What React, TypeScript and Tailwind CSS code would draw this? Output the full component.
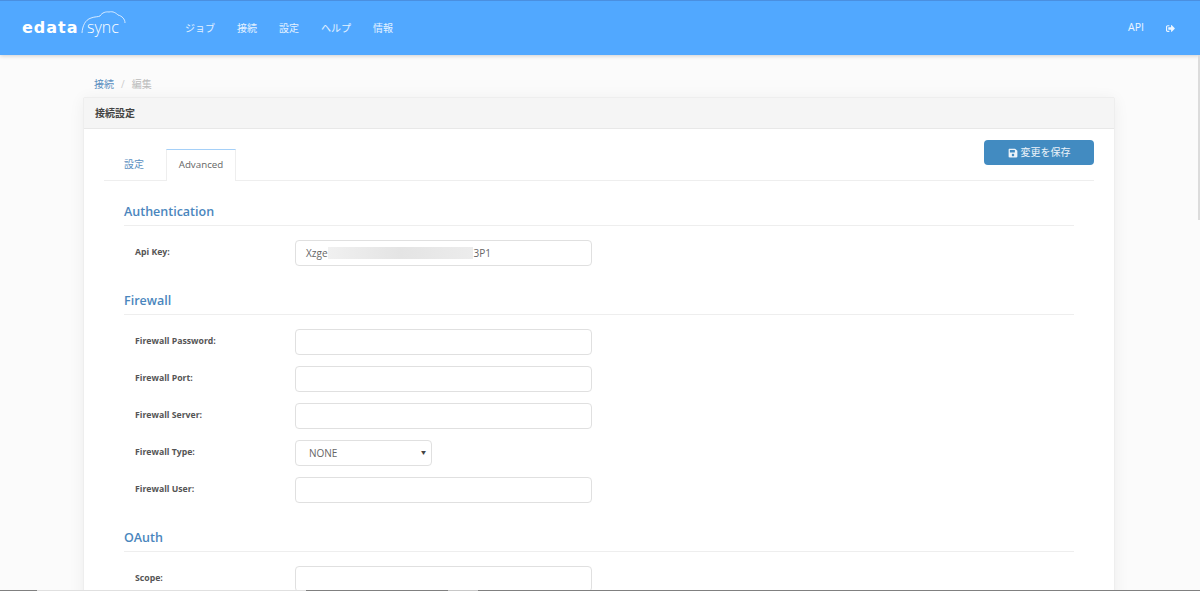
import React from 'react';
import { FaSave, FaSignOutAlt } from 'react-icons/fa';

const fontStack = "font-['Open_Sans','Noto_Sans_CJK_JP',sans-serif]";

function Logo() {
  return (
    <span className="relative block h-[40px] w-[124px]">
      <span className="absolute left-0 top-[7px] font-['DejaVu_Sans',sans-serif] text-[16px] font-bold leading-[26px] tracking-[1px] text-white">
        edata
      </span>
      <span className="absolute left-[65px] top-[6px] text-[16px] font-light leading-[26px] text-white">
        sync
      </span>
      <svg className="absolute left-[56px] top-0" width="72" height="32" viewBox="0 0 72 32" fill="none" stroke="#ffffff" strokeWidth="0.9" opacity="0.85">
        <path d="M4 25C4.5 18 7 12 13 10C17 8.5 20 9 22 8C24 4.5 28 3.5 31 4C35 3 38 5 40 7C44 8 47 11 47 15" />
      </svg>
    </span>
  );
}

function NavLink({ label }: { label: string }) {
  return <span className="text-[10px] text-white/85">{label}</span>;
}

function Field({ label, value }: { label: string; value?: React.ReactNode }) {
  return (
    <div className="mb-[11px] flex h-[26px] items-center">
      <label className="w-[171px] pl-[11px] text-[8.7px] font-bold text-[#555555]">{label}</label>
      <div className="relative flex h-[26px] w-[297px] items-center rounded-[4px] border border-[#e0e0e0] bg-white px-[10px] text-[10px] text-[#666666]">
        {value}
      </div>
    </div>
  );
}

function SectionTitle({ children }: { children: React.ReactNode }) {
  return (
    <h3 className="mb-[14px] border-b border-[#eeeeee] pb-[3px] text-[12.5px] font-semibold leading-[20px] text-[#4a86bd]">
      {children}
    </h3>
  );
}

export default function App() {
  return (
    <div className={`${fontStack} relative h-[591px] w-[1200px] overflow-hidden bg-[#fbfbfb]`}>
      <header className="flex h-[55px] items-center justify-between border-t border-[#4a8fe0] bg-[#51a8ff] pl-[22px] pr-[25px] shadow-[0_1px_4px_rgba(0,0,0,0.18)]">
        <div className="flex items-center">
          <Logo />
          <nav className="ml-[39px] flex gap-[22px]">
            <NavLink label="ジョブ" />
            <NavLink label="接続" />
            <NavLink label="設定" />
            <NavLink label="ヘルプ" />
            <NavLink label="情報" />
          </nav>
        </div>
        <div className="flex items-center gap-[22px] text-white/90">
          <span className="text-[10.5px]">API</span>
          <FaSignOutAlt className="text-[9px]" />
        </div>
      </header>

      <main className="ml-[83px] w-[1032px]">
        <div className="flex h-[42px] items-center gap-[7px] pl-[11px] pt-[16px] text-[10px]">
          <span className="text-[#5b8fbf]">接続</span>
          <span className="text-[#cccccc]">/</span>
          <span className="text-[#bbbbbb]">編集</span>
        </div>
        <section className="h-[600px] rounded-t-[2px] border border-[#eeeeee] bg-white shadow-[0_2px_16px_rgba(0,0,0,0.06)]">
          <div className="flex h-[31px] items-center border-b border-[#e8e8e8] bg-[#f5f5f5] pl-[11px] text-[10px] font-semibold text-[#444444]">
            接続設定
          </div>
          <div className="px-[20px] pt-[11px]">
            <div className="flex h-[41px] items-start justify-between border-b border-[#eeeeee]">
              <div className="flex h-[40px] items-end">
                <div className="flex h-[31px] w-[62px] items-center pl-[20px] text-[10px] text-[#5b8fbf]">設定</div>
                <div className="-mb-px flex h-[32px] w-[70px] items-center justify-center border border-b-0 border-[#eeeeee] border-t-[#a5d0f8] bg-white text-[9.75px] text-[#666666]">
                  Advanced
                </div>
              </div>
              <button className="flex h-[25px] w-[110px] items-center justify-center gap-[3px] rounded-[4px] bg-[#428bc1] text-[10px] text-white/90">
                <FaSave className="text-[10px]" />
                変更を保存
              </button>
            </div>

            <div className="px-[20px] pt-[21px]">
              <SectionTitle>Authentication</SectionTitle>
              <Field
                label="Api Key:"
                value={
                  <>
                    <span>Xzge</span>
                    <span className="absolute left-[32px] top-[6px] h-[12px] w-[145px] bg-linear-to-r from-[#f0f0f0] via-[#e4e4e4] to-[#ececec]" />
                    <span className="ml-[146px]">3P1</span>
                  </>
                }
              />
              <div className="pt-[14px]">
                <SectionTitle>Firewall</SectionTitle>
              </div>
              <Field label="Firewall Password:" />
              <Field label="Firewall Port:" />
              <Field label="Firewall Server:" />
              <div className="mb-[11px] flex h-[26px] items-center">
                <label className="w-[171px] pl-[11px] text-[8.7px] font-bold text-[#555555]">Firewall Type:</label>
                <div className="flex h-[26px] w-[137px] items-center justify-between rounded-[4px] border border-[#e0e0e0] bg-white pl-[13px] pr-[5px] text-[10px] text-[#666666]">
                  <span>NONE</span>
                  <span className="text-[5px] text-[#444444]">▼</span>
                </div>
              </div>
              <Field label="Firewall User:" />
              <div className="pt-[14px]">
                <SectionTitle>OAuth</SectionTitle>
              </div>
              <Field label="Scope:" />
            </div>
          </div>
        </section>
      </main>

      <div className="absolute right-0 top-[55px] h-[165px] w-[2px] bg-[#dcdcdc]" />
      <div className="absolute bottom-0 left-0 flex h-px w-full bg-[#808080]">
        <div className="h-full w-[37px]" />
        <div className="h-full w-[269px] bg-[#e0e0e0]" />
        <div className="h-full w-[142px]" />
        <div className="h-full w-[30px] bg-[#c8c8c8]" />
      </div>
    </div>
  );
}
